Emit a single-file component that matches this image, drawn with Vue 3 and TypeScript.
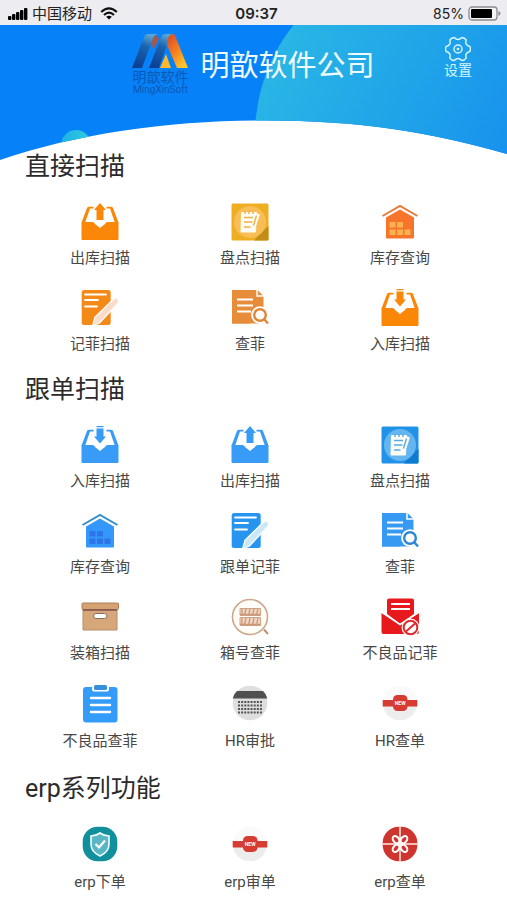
<script setup lang="ts">
type IconName =
  | 'out' | 'in' | 'pad' | 'house' | 'note' | 'search' | 'box' | 'crate'
  | 'reject' | 'clipboard' | 'calendar' | 'badge' | 'shield' | 'gift'

interface Tile {
  label: string
  icon: IconName
  mixed?: boolean
}

interface Section {
  title: string
  tone: 'orange' | 'blue'
  tiles: Tile[]
}

const sections: Section[] = [
  {
    title: '直接扫描',
    tone: 'orange',
    tiles: [
      { label: '出库扫描', icon: 'out' },
      { label: '盘点扫描', icon: 'pad' },
      { label: '库存查询', icon: 'house' },
      { label: '记菲扫描', icon: 'note' },
      { label: '查菲', icon: 'search' },
      { label: '入库扫描', icon: 'in' },
    ],
  },
  {
    title: '跟单扫描',
    tone: 'blue',
    tiles: [
      { label: '入库扫描', icon: 'in' },
      { label: '出库扫描', icon: 'out' },
      { label: '盘点扫描', icon: 'pad' },
      { label: '库存查询', icon: 'house' },
      { label: '跟单记菲', icon: 'note' },
      { label: '查菲', icon: 'search' },
      { label: '装箱扫描', icon: 'box' },
      { label: '箱号查菲', icon: 'crate' },
      { label: '不良品记菲', icon: 'reject' },
      { label: '不良品查菲', icon: 'clipboard', mixed: true },
      { label: 'HR审批', icon: 'calendar', mixed: true },
      { label: 'HR查单', icon: 'badge', mixed: true },
    ],
  },
  {
    title: 'erp系列功能',
    tone: 'blue',
    tiles: [
      { label: 'erp下单', icon: 'shield', mixed: true },
      { label: 'erp审单', icon: 'badge', mixed: true },
      { label: 'erp查单', icon: 'gift', mixed: true },
    ],
  },
]
</script>

<template>
  <div class="page">
    <div class="status">
      <div class="status-left">
        <svg class="signal" width="20" height="12" viewBox="0 0 20 12" aria-hidden="true">
          <rect x="0" y="8" width="3.4" height="4" rx="1" />
          <rect x="4" y="6" width="3.4" height="6" rx="1" />
          <rect x="8" y="4" width="3.4" height="8" rx="1" />
          <rect x="12" y="2" width="3.4" height="10" rx="1" />
          <rect x="16" y="0" width="3.4" height="12" rx="1" />
        </svg>
        <span>中国移动</span>
        <svg class="wifi" width="18" height="13" viewBox="0 0 18 13" aria-hidden="true">
          <path d="M1.2 5Q9-2.2 16.8 5M4 8Q9 3.4 14 8" fill="none" stroke="#111" stroke-width="2.2" />
          <path d="M9 12.6 6.2 9.8Q9 7.6 11.8 9.8Z" />
        </svg>
      </div>
      <span class="clock">09:37</span>
      <div class="status-right">
        <span>85%</span>
        <svg width="33" height="15" viewBox="0 0 33 15" aria-hidden="true">
          <rect x="1" y="1" width="28" height="13" rx="3" fill="#f4f4f6" stroke="#8c8c90" stroke-width="1.3" />
          <rect x="3" y="3" width="21" height="9" rx="1" fill="#000" />
          <path d="M30.5 5v5q2-.8 2-2.500t-2-2.500Z" fill="#8c8c90" />
        </svg>
      </div>
    </div>

    <header class="header">
      <svg class="backdrop" viewBox="0 0 507 135" preserveAspectRatio="none" aria-hidden="true">
        <defs>
          <linearGradient id="sky" x1="0" y1="0.2" x2="0.85" y2="0.65">
            <stop offset="0" stop-color="#2bb9e4" />
            <stop offset="0.5" stop-color="#1fa3e9" />
            <stop offset="1" stop-color="#1489f0" />
          </linearGradient>
          <linearGradient id="bubble" x1="0" y1="0" x2="1" y2="0">
            <stop offset="0" stop-color="#1fb0e4" />
            <stop offset="1" stop-color="#2fcbdf" />
          </linearGradient>
          <clipPath id="hill">
            <path d="M0 0H507V129C430 107 360 95.500 265 95.500C170 95.500 80 108 0 135Z" />
          </clipPath>
        </defs>
        <g clip-path="url(#hill)">
          <rect width="507" height="135" fill="#0781f8" />
          <circle cx="431" cy="110" r="176" fill="url(#sky)" />
          <circle cx="76" cy="120" r="15" fill="url(#bubble)" />
        </g>
      </svg>
      <div class="brand">
        <div class="logo">
          <svg width="56" height="34" viewBox="0 0 56 34" aria-hidden="true">
            <defs>
              <linearGradient id="navy" x1="0.6" y1="0" x2="0.3" y2="1">
                <stop offset="0" stop-color="#5aa5d8" />
                <stop offset="0.35" stop-color="#1c64ad" />
                <stop offset="1" stop-color="#0b3f94" />
              </linearGradient>
              <linearGradient id="flame" x1="0" y1="0" x2="0.7" y2="1">
                <stop offset="0" stop-color="#d3452c" />
                <stop offset="0.5" stop-color="#f47b20" />
                <stop offset="1" stop-color="#fcc62c" />
              </linearGradient>
            </defs>
            <path d="M19 4 24 1 27 5 21 16Z" fill="#a4574e" />
            <path d="M34 20 39 34H28Z" fill="#fbb92d" />
            <path d="M0 34 12 3Q13 0 17 0H26Q22 1 21 4L10 34Z" fill="url(#navy)" />
            <path d="M17 34 29 3Q30 0 34 0H42Q38 1 37 4L27 34Z" fill="url(#navy)" />
            <path d="M36 4Q38 0 42 0Q43 1 44 4L56 34H45L35 11Z" fill="url(#flame)" />
          </svg>
          <span class="logo-cn">明歆软件</span>
          <span class="logo-en">MingXinSoft</span>
        </div>
        <h1>明歆软件公司</h1>
      </div>
      <button class="settings" type="button">
        <svg width="26" height="26" viewBox="0 0 26 26" fill="none" stroke="#d5f5ff" stroke-width="1.5" stroke-linejoin="round" aria-hidden="true">
          <path d="M24.900 10.500Q26 13 24.900 15.500Q19.500 16.800 21.200 22.100Q19.600 24.400 16.800 24.600Q13 20.500 9.200 24.600Q6.400 24.400 4.800 22.100Q6.500 16.800 1.100 15.500Q0 13 1.100 10.500Q6.500 9.200 4.800 3.900Q6.400 1.600 9.200 1.400Q13 5.500 16.800 1.400Q19.600 1.600 21.200 3.900Q19.500 9.200 24.900 10.500Z" />
          <circle cx="13" cy="13" r="4" />
          <circle cx="13" cy="13" r="0.6" />
        </svg>
        <span>设置</span>
      </button>
    </header>

    <main>
      <section v-for="section in sections" :key="section.title" :class="section.tone">
        <h2>{{ section.title }}</h2>
        <div class="grid">
          <button
            v-for="tile in section.tiles"
            :key="tile.label"
            class="tile"
            :class="{ mixed: tile.mixed }"
            type="button"
          >
            <svg class="icon" viewBox="0 0 40 40" aria-hidden="true">
              <template v-if="tile.icon === 'out' || tile.icon === 'in'">
                <path d="M13.500 4.700V6.500H10L5.200 20.500H1.500L7 6Q7.500 4.700 9 4.700ZM26.500 4.700V6.500H30L34.800 20.500H38.500L33 6Q32.500 4.700 31 4.700Z" fill="currentColor" />
                <path d="M1.500 20H12.500Q14 20 14.800 21.500Q15.500 22.800 17 23.500L20 26 23 23.500Q24.500 22.800 25.200 21.500Q26 20 27.500 20H38.500V37Q38.500 38 37.500 38H2.500Q1.500 38 1.500 37Z" fill="currentColor" />
                <path v-if="tile.icon === 'out'" d="M20 1 26 8H23.500V18H16.500V8H14Z" fill="currentColor" />
                <path v-else d="M16.500 1H23.500V2.200H16.500ZM16.500 3.500H23.500V11.500H26L20 18.500 14 11.500H16.500Z" fill="currentColor" />
              </template>
              <template v-else-if="tile.icon === 'pad'">
                <rect class="pad-base" x="1.500" y="1.500" width="37" height="37" rx="1.500" />
                <path class="pad-shade" d="M32 30 38.500 24V37Q38.500 38.500 37 38.500H24Z" />
                <circle class="pad-disc" cx="20" cy="20" r="16" />
                <path d="M11.500 10.500H26.500L25.500 30H11Z" fill="#fffdf3" stroke="#fffdf3" stroke-linejoin="round" />
                <path class="pad-line" d="M14 15.500H23M14 20H22.500M14 25H20.500M15 9V12M19 9V12M23 9V12" />
                <path d="M28.500 12 25 22.500" stroke="#fffdf3" stroke-width="3" />
                <path class="pad-line" d="M26.500 13.500 23.500 23.500" />
              </template>
              <template v-else-if="tile.icon === 'house'">
                <path class="roof" d="M2.500 14 20 4 37.500 14" />
                <path class="wall" d="M6 15.500 20 7.500 34 15.500V35.500Q34 36.500 33 36.500H7Q6 36.500 6 35.500Z" />
                <path class="windows" d="M9.500 20H15.500V25.500H9.500ZM17 20H23V25.500H17ZM9.500 27.500H15.500V33H9.500ZM17 27.500H23V33H17ZM24.500 27.500H30.500V33H24.500Z" />
              </template>
              <template v-else-if="tile.icon === 'note'">
                <rect class="note-sheet" x="1.700" y="2" width="29" height="35" rx="2.500" />
                <path d="M5 6.500H26M5 12H18M5 18.500H17" stroke="#fff" stroke-width="1.800" stroke-linecap="round" />
                <path class="pen" d="M12.500 38 15 29 33 11.500 36.500 9.500 39 13 37 16.500 19.500 35Z" />
              </template>
              <template v-else-if="tile.icon === 'search'">
                <path class="find-sheet" d="M2 2H27.500L33.500 8V22H24L20 35.500H2Z" />
                <path d="M2 30H30V35.500H2Z" class="find-sheet" />
                <path d="M27 1.500V8H34" fill="none" stroke="#fff" stroke-width="1.500" />
                <path d="M7 11.500H23M7 17.500H23M7 23.500H21" stroke="#fff" stroke-width="2" />
                <circle cx="30" cy="27" r="8.800" fill="#fff" />
                <circle class="lens" cx="30" cy="27" r="5.800" />
                <path class="lens" d="M34 31 38 35.500" />
              </template>
              <template v-else-if="tile.icon === 'box'">
                <path d="M3 11H37V33H3Z" fill="#d6a778" stroke="#b58c69" />
                <rect x="2" y="6" width="36.500" height="6.500" rx="1" fill="#d5a372" stroke="#ad7f59" />
                <path d="M3 13H37" stroke="#7e5151" stroke-width="1.500" />
                <rect x="13.500" y="16.500" width="13.500" height="5" rx="2.500" fill="#fff" stroke="#8b6a64" />
              </template>
              <template v-else-if="tile.icon === 'crate'">
                <circle cx="20" cy="20" r="17.500" fill="#fffdf7" stroke="#cda88c" stroke-width="1.600" />
                <path d="M34 32.500 38 37" stroke="#bd9275" stroke-width="2" />
                <path d="M10 11.500H30.500V18.500H10ZM10 20.500H30.500V28.500H10Z" fill="#f0d6c4" stroke="#cfa285" />
                <path d="M12 12V18M16 12 14.500 18M20 12 18.500 18M24 12 22.500 18M28 12 26.500 18M12 21V28M16 21 14.500 28M20 21 18.500 28M24 21 22.500 28M28 21 26.500 28M10 17.500H30.500M10 27.500H30.500" stroke="#cc9978" stroke-width="1.300" />
              </template>
              <template v-else-if="tile.icon === 'reject'">
                <path d="M7 17V3.500Q7 1.500 9 1.500H32Q34 1.500 34 3.500V17L20.500 27Z" fill="#e8191c" />
                <path d="M11 7H30M11 12H30" stroke="#fff" stroke-width="1.800" />
                <path d="M1.500 16 20 28 39 16V35Q39 37 37 37H3.500Q1.500 37 1.500 35Z" fill="#e8191c" />
                <path d="M1.500 15 20 27.500 39 15" fill="none" stroke="#fff" stroke-width="1.500" />
                <circle cx="30.500" cy="30.500" r="9" fill="#fff" />
                <circle cx="30.500" cy="30.500" r="6.800" fill="#fff" stroke="#e3292b" stroke-width="2" />
                <path d="M26 34.500 35 26.500" stroke="#e3292b" stroke-width="2" />
              </template>
              <template v-else-if="tile.icon === 'clipboard'">
                <path d="M6 4H34.500Q37.500 4 37.500 7V36.500Q37.500 39.500 34.500 39.500H6Q3 39.500 3 36.500V7Q3 4 6 4Z" fill="#339cfb" />
                <path d="M12 3H29V6.500Q29 8.500 27 8.500H14Q12 8.500 12 6.500Z" fill="#fff" />
                <rect x="14" y="2" width="13" height="5" rx="1.500" fill="#3591db" />
                <path d="M11 15H30M11 22H30M11 29H30" stroke="#fff" stroke-width="2.400" stroke-linecap="round" />
              </template>
              <template v-else-if="tile.icon === 'calendar'">
                <circle cx="20" cy="20" r="17.300" fill="#dedede" />
                <path d="M7 8H33Q36.500 11 37.300 15.500H2.700Q3.500 11 7 8Z" fill="#505052" />
                <path d="M8 19H32M8 22.500H32M8 26H32M8 29.500H32" stroke="#555" stroke-width="2.200" stroke-dasharray="2 1.140" />
              </template>
              <template v-else-if="tile.icon === 'badge'">
                <circle cx="20" cy="20" r="17.300" fill="#fafafa" />
                <path d="M2.700 20H37.300A17.300 17.300 0 0 1 2.700 20Z" fill="#ededed" />
                <path d="M2.700 17H37.300V23.500H2.700Z" fill="#d63c31" />
                <rect x="13" y="12" width="14.500" height="16" rx="4.500" fill="#d63c31" />
                <text class="badge-text" x="20.200" y="22" text-anchor="middle">NEW</text>
              </template>
              <template v-else-if="tile.icon === 'shield'">
                <rect x="2.700" y="2.700" width="34.600" height="34.600" rx="15" fill="#118f9d" />
                <path d="M20 9Q24 12 29 12V20Q29 28 20 32Q11 28 11 20V12Q16 12 20 9Z" fill="#5ab6c4" stroke="#f2ffff" stroke-width="1.600" />
                <path d="M15.500 20 19 23.500 25 16.500" fill="none" stroke="#fff" stroke-width="2.200" />
              </template>
              <template v-else>
                <rect x="2.700" y="2.700" width="34.600" height="34.600" rx="16" fill="#ce352e" />
                <path d="M20 2.700V37.300M2.700 20H37.300" stroke="#ffe9e3" stroke-width="1.500" />
                <g fill="#ce352e" stroke="#fff" stroke-width="2">
                  <ellipse cx="16" cy="15.700" rx="2.800" ry="4" transform="rotate(-38 16 15.700)" />
                  <ellipse cx="24" cy="15.700" rx="2.800" ry="4" transform="rotate(38 24 15.700)" />
                  <ellipse cx="16" cy="24.300" rx="2.800" ry="4" transform="rotate(38 16 24.300)" />
                  <ellipse cx="24" cy="24.300" rx="2.800" ry="4" transform="rotate(-38 24 24.300)" />
                </g>
              </template>
            </svg>
            <span class="label">{{ tile.label }}</span>
          </button>
        </div>
      </section>
    </main>
  </div>
</template>

<style>
body {
  margin: 0;
  background: #fff;
}
</style>

<style scoped>
.page {
  min-height: 100vh;
  box-sizing: border-box;
  overflow: hidden;
  background: #fff;
  color: #333;
  font-family: Roboto, "Noto Sans CJK SC", sans-serif;
}

.status {
  display: grid;
  grid-template-columns: 1fr auto 1fr;
  align-items: center;
  height: 25px;
  padding: 2px 6px 0 8px;
  box-sizing: border-box;
  background: #ececf1;
  color: #222;
  font: 15px/20px Inter, "Noto Sans CJK SC", sans-serif;
}

.status-left,
.status-right {
  display: flex;
  align-items: center;
  gap: 4px;
}

.status-left .wifi {
  margin-left: 4px;
}

.status-right {
  justify-content: flex-end;
  font-size: 14px;
}

.clock {
  padding-left: 4px;
  font-weight: 600;
}

.header {
  position: relative;
  display: grid;
  grid-template-columns: 1fr auto 1fr;
  align-items: start;
  height: 123px;
}

.backdrop {
  position: absolute;
  top: 0;
  left: 0;
  width: 100%;
  height: 135px;
}

.brand {
  position: relative;
  grid-column: 2;
  display: flex;
  gap: 12px;
  padding-top: 9px;
}

.logo {
  display: flex;
  flex-direction: column;
  align-items: center;
  color: #0a59b4;
}

.logo-cn {
  margin-top: 1px;
  font-size: 14px;
  line-height: 16px;
}

.logo-en {
  font-size: 10px;
  line-height: 10px;
}

h1 {
  margin: 0;
  padding-top: 12px;
  color: #eefbff;
  font-size: 29px;
  font-weight: 400;
  line-height: 40px;
}

button {
  margin: 0;
  padding: 0;
  border: 0;
  background: none;
  font-family: inherit;
  cursor: pointer;
}

.settings {
  position: relative;
  justify-self: end;
  display: flex;
  flex-direction: column;
  align-items: center;
  margin: 11px 35px 0 0;
  color: #d5f5ff;
  font-size: 14px;
  line-height: 16px;
}

main {
  position: relative;
}

section {
  padding-bottom: 15px;
}

h2 {
  margin: 0;
  padding-left: 25px;
  color: #2b2b2b;
  font-size: 25px;
  font-weight: 400;
  line-height: 38px;
}

.grid {
  display: grid;
  grid-template-columns: repeat(3, 1fr);
  padding: 16px 32px 0 25px;
  row-gap: 18px;
}

.tile {
  display: flex;
  flex-direction: column;
  align-items: center;
  gap: 4px;
  color: inherit;
}

.icon {
  width: 40px;
  height: 40px;
}

.label {
  color: #484848;
  font-size: 15px;
  line-height: 24px;
}

.mixed .label {
  line-height: 28px;
}

.orange .icon {
  color: #fb8708;
}

.blue .icon {
  color: #389cf6;
}

.pad-base {
  fill: #edae22;
}

.pad-shade {
  fill: #c28c18;
}

.pad-disc {
  fill: #f8bd55;
}

.pad-line {
  fill: none;
  stroke: #eeb24d;
  stroke-width: 1.4px;
}

.blue .pad-base {
  fill: #2093e8;
}

.blue .pad-shade {
  fill: #0c7bd0;
}

.blue .pad-disc {
  fill: #65b5f1;
}

.blue .pad-line {
  stroke: #58a9e8;
}

.roof {
  fill: none;
  stroke: #e77a37;
  stroke-width: 2px;
}

.wall {
  fill: #f6752a;
}

.windows {
  fill: #fbb14f;
}

.blue .roof {
  stroke: #368fcc;
}

.blue .wall {
  fill: #3398fa;
}

.blue .windows {
  fill: #2c74e8;
}

.note-sheet {
  fill: #f38a17;
}

.pen {
  fill: #fbdccb;
  stroke: #fff;
  stroke-width: 1.2px;
}

.blue .note-sheet {
  fill: #2795ef;
}

.blue .pen {
  fill: #cbe9f5;
}

.find-sheet {
  fill: #e78c3b;
}

.lens {
  fill: none;
  stroke: #df8638;
  stroke-width: 2.4px;
}

.blue .find-sheet {
  fill: #369af3;
}

.blue .lens {
  stroke: #2d86d4;
}

.badge-text {
  fill: #fff;
  font: 700 5px Roboto, sans-serif;
}
</style>
